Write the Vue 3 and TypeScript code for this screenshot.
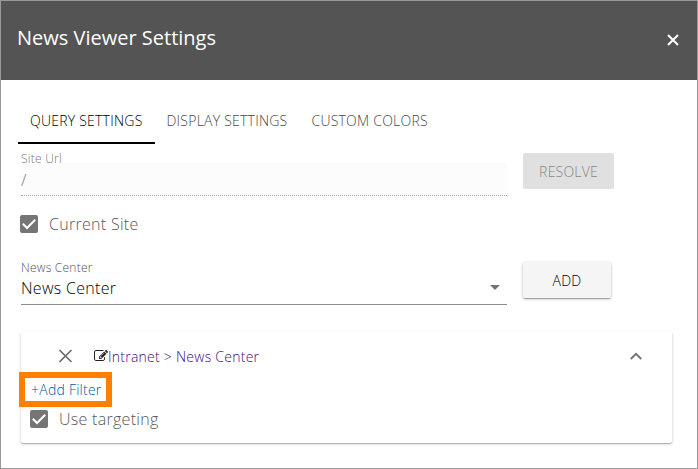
<script setup lang="ts">
import { ref } from 'vue'

const tabs: string[] = ['QUERY SETTINGS', 'DISPLAY SETTINGS', 'CUSTOM COLORS']
const activeTab = ref<number>(0)
const currentSite = ref<boolean>(true)
const useTargeting = ref<boolean>(true)
const expanded = ref<boolean>(true)
</script>

<template>
  <section class="dialog">
    <header class="header">
      <h1 class="title">News Viewer Settings</h1>
      <button class="close" aria-label="Close">
        <svg width="12" height="12" viewBox="0 0 12 12"><path d="M1 1L11 11M11 1L1 11" /></svg>
      </button>
    </header>

    <nav class="tabs">
      <button
        v-for="(tab, i) in tabs"
        :key="tab"
        class="tab"
        :class="{ active: i === activeTab }"
        @click="activeTab = i"
      ><span>{{ tab }}</span></button>
    </nav>

    <main class="body">
      <div class="row site-row">
        <div class="field disabled">
          <span class="label">Site Url</span>
          <span class="value">/</span>
        </div>
        <button class="btn resolve" disabled><span>RESOLVE</span></button>
      </div>

      <div class="check" @click="currentSite = !currentSite">
        <span class="box">
          <svg v-if="currentSite" width="18" height="18" viewBox="0 0 18 18"><path d="M2.8 8.8L7 13L15.2 4.8" /></svg>
        </span>
        <span class="check-text">Current Site</span>
      </div>

      <div class="row center-row">
        <div class="field">
          <span class="label">News Center</span>
          <span class="value select">
            <span>News Center</span>
            <svg width="10" height="5" viewBox="0 0 10 5"><path d="M0 0H10L5 5Z" /></svg>
          </span>
        </div>
        <button class="btn add"><span>ADD</span></button>
      </div>

      <div class="card">
        <div class="card-head">
          <svg class="remove" width="14" height="14" viewBox="0 0 14 14"><path d="M.5 1L12.500 13M12.500 1L.5 13" /></svg>
          <svg class="edit" width="14" height="14" viewBox="0 0 1792 1792">
            <path d="M888 1184l116-116-152-152-116 116v56h96v96h56zm440-720q-16-16-33 1l-350 350q-17 17-1 33t33-1l350-350q17-17 1-33zm80 594v190q0 119-84.500 203.500t-203.500 84.500h-832q-119 0-203.500-84.500t-84.500-203.500v-832q0-119 84.500-203.500t203.500-84.500h832q63 0 117 25 15 7 18 23 3 17-9 29l-49 49q-14 14-32 8-23-6-45-6h-832q-66 0-113 47t-47 113v832q0 66 47 113t113 47h832q66 0 113-47t47-113v-126q0-13 9-22l64-64q15-15 35-7t20 29zm-96-738l288 288-672 672h-288v-288zm444 132l-92 92-288-288 92-92q28-28 68-28t68 28l152 152q28 28 28 68t-28 68z" />
          </svg>
          <a class="crumb">Intranet &gt; News Center</a>
          <button class="toggle" aria-label="Toggle" @click="expanded = !expanded">
            <svg width="12" height="8" viewBox="0 0 12 8"><path d="M.8 7L6 1.800L11.200 7" /></svg>
          </button>
        </div>
        <div class="highlight"><a class="filter">+Add Filter</a></div>
        <div class="check targeting" @click="useTargeting = !useTargeting">
          <span class="box">
            <svg v-if="useTargeting" width="18" height="18" viewBox="0 0 18 18"><path d="M2.800 8.800L7 13L15.200 4.800" /></svg>
          </span>
          <span class="check-text">Use targeting</span>
        </div>
      </div>
    </main>
  </section>
</template>

<style>
body {
  margin: 0;
  background: #fff;
}
</style>

<style scoped>
* {
  box-sizing: border-box;
}
.dialog {
  width: 698px;
  height: 469px;
  border: 1px solid #999;
  background: #fff;
  font-family: "Open Sans", "Noto Sans", sans-serif;
  color: #000;
  overflow: hidden;
  white-space: nowrap;
}
button {
  border: 0;
  margin: 0;
  padding: 0;
  background: none;
  font: inherit;
  color: inherit;
}
svg {
  display: block;
  flex: none;
}
.header {
  height: 79px;
  background: #545454;
  color: #fff;
  display: flex;
  align-items: center;
  justify-content: space-between;
  padding: 0 18px 0 16px;
}
.title {
  margin: 0;
  padding-bottom: 5px;
  font-size: 20px;
  line-height: 28px;
  font-weight: 400;
}
.close {
  padding-bottom: 2px;
}
.close path {
  fill: none;
  stroke: #fff;
  stroke-width: 2;
}
.tabs {
  display: flex;
  height: 64px;
  padding: 16px 0 0 17px;
}
.tab {
  height: 48px;
  padding: 4px 12px 0;
  font-size: 14px;
  line-height: 42px;
  font-weight: 300;
  letter-spacing: 0.23px;
  color: #484848;
  border-bottom: 2px solid transparent;
}
.tab.active {
  color: #000;
  border-bottom-color: #000;
}
.body {
  padding: 8px 25px 0 20px;
}
.row {
  display: flex;
  gap: 16px;
}
.site-row {
  height: 44px;
}
.field {
  width: 486px;
  display: flex;
  flex-direction: column;
}
.label {
  height: 11px;
  font-size: 12px;
  line-height: 14px;
  font-weight: 300;
  letter-spacing: 0.24px;
  color: #505050;
}
.disabled .label {
  color: #777;
}
.value {
  height: 33px;
  font-size: 16px;
  font-weight: 300;
  line-height: 34px;
  letter-spacing: 0.3px;
}
.disabled .value {
  background: #fcfcfc;
  color: #777;
  border-bottom: 1px dotted #aaa;
}
.btn {
  height: 36px;
  border-radius: 2px;
  font-size: 14px;
  font-weight: 300;
  line-height: 34px;
  letter-spacing: 0.2px;
  margin-top: 1px;
  padding-top: 2px;
}
.resolve {
  width: 91px;
  background: #e0e0e0;
  color: #858585;
}
.check {
  display: flex;
  align-items: center;
  height: 24px;
}
.body > .check {
  margin: 16px 0 0 -1px;
}
.box {
  width: 18px;
  height: 18px;
  border-radius: 2px;
  background: #757575;
}
.box path {
  fill: none;
  stroke: #fff;
  stroke-width: 2;
}
.check-text {
  margin-left: 11px;
  font-size: 16px;
  line-height: 24px;
  font-weight: 300;
  letter-spacing: 0.29px;
  color: #585858;
}
.center-row {
  margin-top: 25px;
  height: 44px;
}
.select {
  display: flex;
  align-items: center;
  justify-content: space-between;
  padding: 0 7px 1px 0;
  border-bottom: 1px solid #8c8c8c;
  line-height: 28px;
}
.select svg {
  margin-bottom: 0;
}
.select path {
  fill: #757575;
}
.add {
  width: 88px;
  background: #f5f5f5;
  color: #000;
  box-shadow: 0 1px 3px rgba(0, 0, 0, 0.3), 0 2px 1px -1px rgba(0, 0, 0, 0.2);
}
.card {
  width: 651px;
  height: 111px;
  margin-top: 27px;
  border-radius: 2px;
  box-shadow: 0 1px 3px rgba(0, 0, 0, 0.2), 0 1px 1px rgba(0, 0, 0, 0.2);
}
.card-head {
  display: flex;
  align-items: center;
  height: 40px;
  padding: 8px 30px 0 38px;
}
.remove path {
  fill: none;
  stroke: #6a6a6a;
  stroke-width: 1.6;
}
.edit {
  margin-left: 21px;
}
.edit path {
  fill: #212121;
}
.crumb {
  padding-top: 2px;
  font-size: 14px;
  line-height: 20px;
  font-weight: 300;
  letter-spacing: 0.25px;
  color: #420c85;
}
.toggle {
  margin-left: auto;
}
.toggle path {
  fill: none;
  stroke: #757575;
  stroke-width: 2;
}
.highlight {
  width: 93px;
  height: 35px;
  margin-left: -2px;
  border: 6px solid #ff8000;
  padding-left: 6px;
  line-height: 23px;
}
.filter {
  display: block;
  font-size: 14px;
  font-weight: 300;
  letter-spacing: 0.24px;
  color: #0058a8;
}
.targeting {
  margin-left: 9px;
}
</style>
